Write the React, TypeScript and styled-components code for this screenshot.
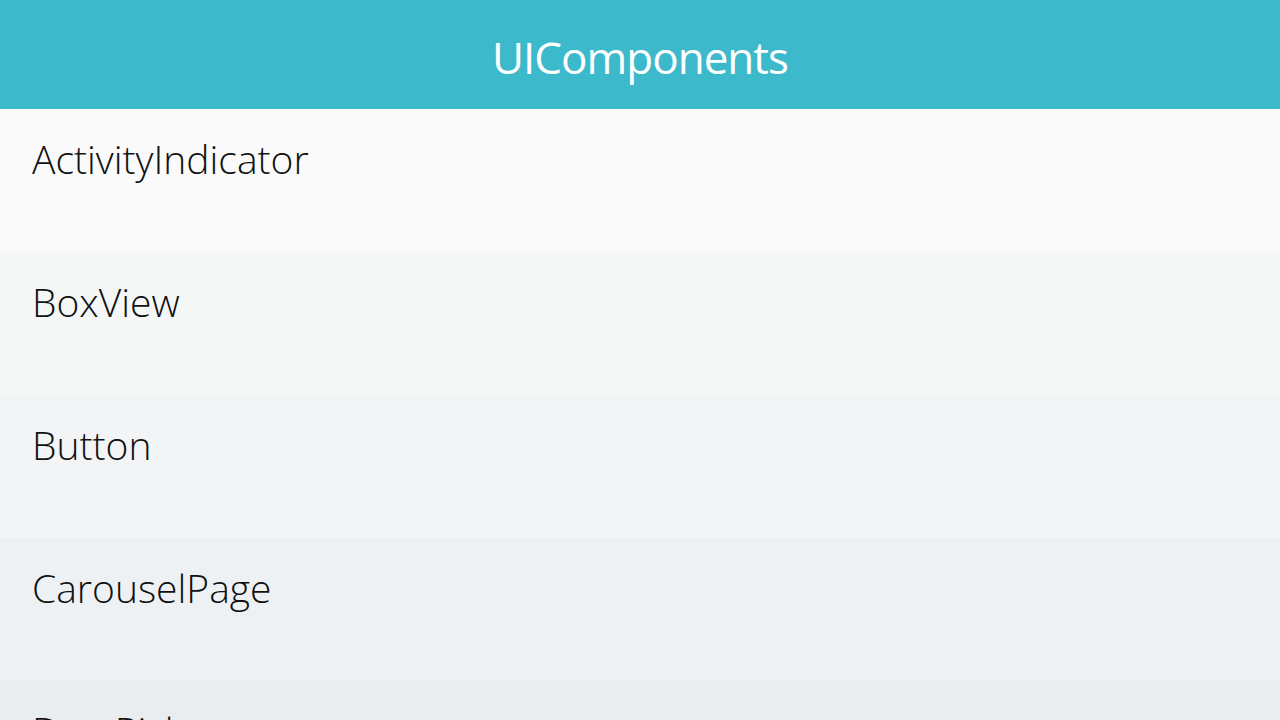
import styled, { createGlobalStyle } from "styled-components";

const GlobalStyle = createGlobalStyle`
  html, body {
    margin: 0;
    padding: 0;
    overflow: hidden;
  }
  body {
    font-family: "Open Sans", "Noto Sans", sans-serif;
    background: #fafafa;
  }
`;

const Page = styled.div`
  width: 1280px;
  height: 720px;
  display: flex;
  flex-direction: column;
  overflow: hidden;
`;

const Header = styled.header`
  flex: 0 0 109px;
  background-color: #3db9cc;
  display: flex;
  justify-content: center;
  align-items: center;
`;

const Title = styled.h1`
  margin: 0;
  color: #ffffff;
  font-family: "Open Sans", sans-serif;
  font-weight: 400;
  font-size: 44px;
  letter-spacing: -1px;
  padding-top: 4px;
`;

const List = styled.ul`
  list-style: none;
  margin: 0;
  padding: 0;
`;

const Row = styled.li<{ $bg: string }>`
  height: 143px;
  box-sizing: border-box;
  padding: 26px 32px 0;
  background-color: ${(p) => p.$bg};
  font-size: 39px;
  line-height: 48px;
  font-weight: 300;
  color: #111111;
`;

const items = [
  { name: "ActivityIndicator", bg: "#fafafa" },
  { name: "BoxView", bg: "#f5f7f7" },
  { name: "Button", bg: "#f3f4f6" },
  { name: "CarouselPage", bg: "#eef1f4" },
  { name: "DatePicker", bg: "#eaedf0" },
];

function App() {
  return (
    <Page>
      <GlobalStyle />
      <Header>
        <Title>UIComponents</Title>
      </Header>
      <List>
        {items.map((item) => (
          <Row key={item.name} $bg={item.bg}>
            {item.name}
          </Row>
        ))}
      </List>
    </Page>
  );
}

export default App;
